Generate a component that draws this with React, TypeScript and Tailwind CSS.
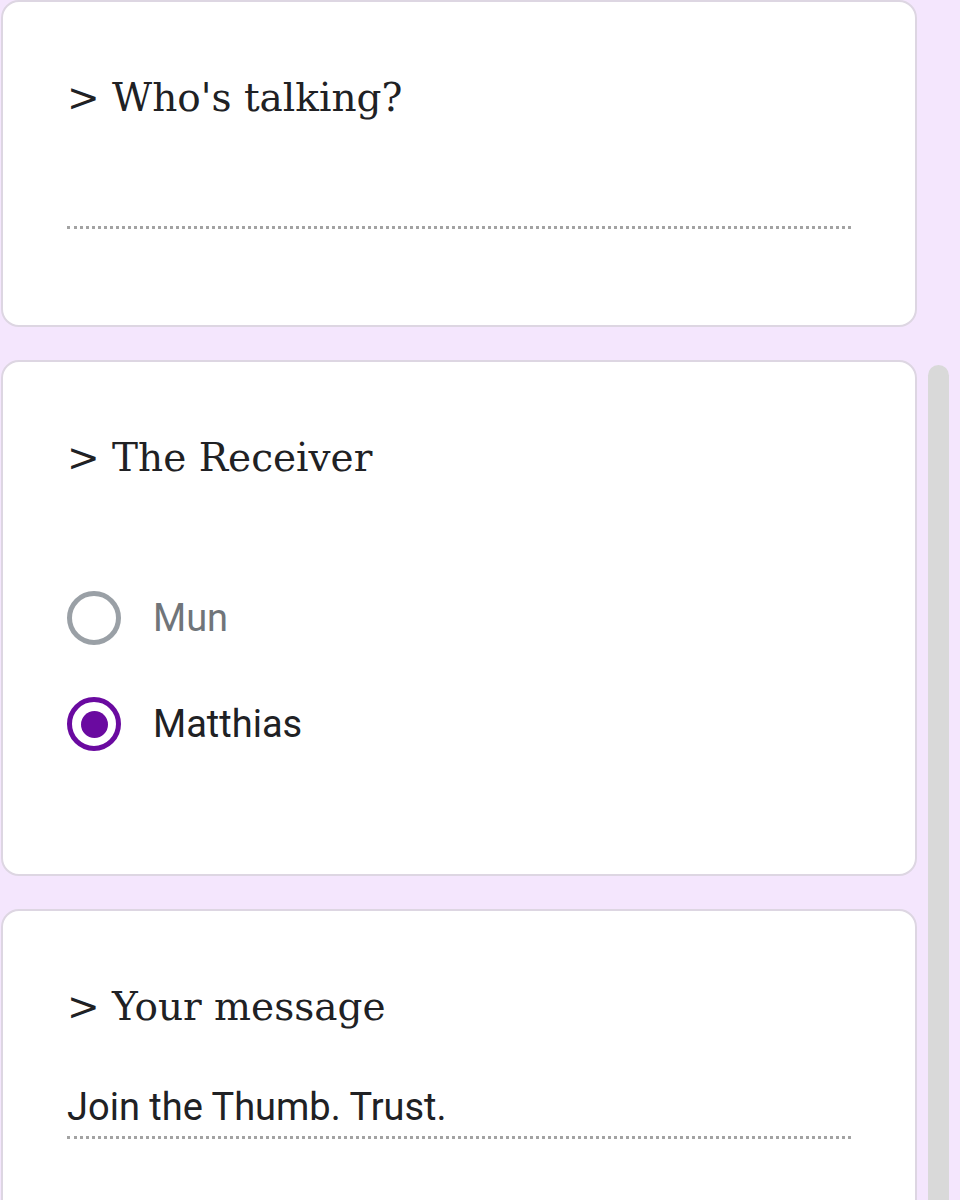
import React from "react";

const serif = { fontFamily: '"DejaVu Serif", "Liberation Serif", serif' };
const sans = { fontFamily: 'Roboto, "Noto Sans", sans-serif' };

function Card({
  className,
  children,
}: {
  className: string;
  children: React.ReactNode;
}) {
  return (
    <div
      className={`shrink-0 rounded-[18px] border-2 border-[#ddd6e2] bg-white pl-[64px] pr-[64px] ${className}`}
    >
      {children}
    </div>
  );
}

function Title({ text }: { text: string }) {
  return (
    <h2
      className="text-[39px] leading-[48px] text-[#202124]"
      style={serif}
    >
      &gt; {text}
    </h2>
  );
}

function Radio({ label, checked }: { label: string; checked?: boolean }) {
  return (
    <div className="flex h-[54px] items-center gap-[32px]">
      <span
        className={`flex h-[54px] w-[54px] items-center justify-center rounded-full border-[5px] ${
          checked ? "border-[#6a0aa0]" : "border-[#9aa0a6]"
        }`}
      >
        {checked && <span className="h-[27px] w-[27px] rounded-full bg-[#6a0aa0]" />}
      </span>
      <span
        className={`text-[38px] ${checked ? "text-[#202124]" : "text-[#70757a]"}`}
        style={sans}
      >
        {label}
      </span>
    </div>
  );
}

export default function App() {
  return (
    <div className="flex h-[1200px] w-[960px] overflow-hidden bg-[#f4e6fd]">
      <div className="ml-[1px] flex w-[916px] shrink-0 flex-col gap-[33px]">
        <Card className="h-[327px] pt-[72px]">
          <Title text="Who's talking?" />
          <div className="mt-[104px] border-b-[3px] border-dotted border-[#a3a3a3]" />
        </Card>

        <Card className="h-[516px] pt-[72px]">
          <Title text="The Receiver" />
          <div className="mt-[109px] flex flex-col gap-[52px]">
            <Radio label="Mun" />
            <Radio label="Matthias" checked />
          </div>
        </Card>

        <Card className="h-[400px] pt-[72px]">
          <Title text="Your message" />
          <div
            className="mt-[53px] border-b-[3px] border-dotted border-[#a3a3a3] pb-[6px] text-[38px] leading-[46px] text-[#202124]"
            style={sans}
          >
            Join the Thumb. Trust.
          </div>
        </Card>
      </div>

      <div className="ml-[11px] pt-[365px]">
        <div className="h-[900px] w-[21px] rounded-full bg-[#d9d9d9]" />
      </div>
    </div>
  );
}
